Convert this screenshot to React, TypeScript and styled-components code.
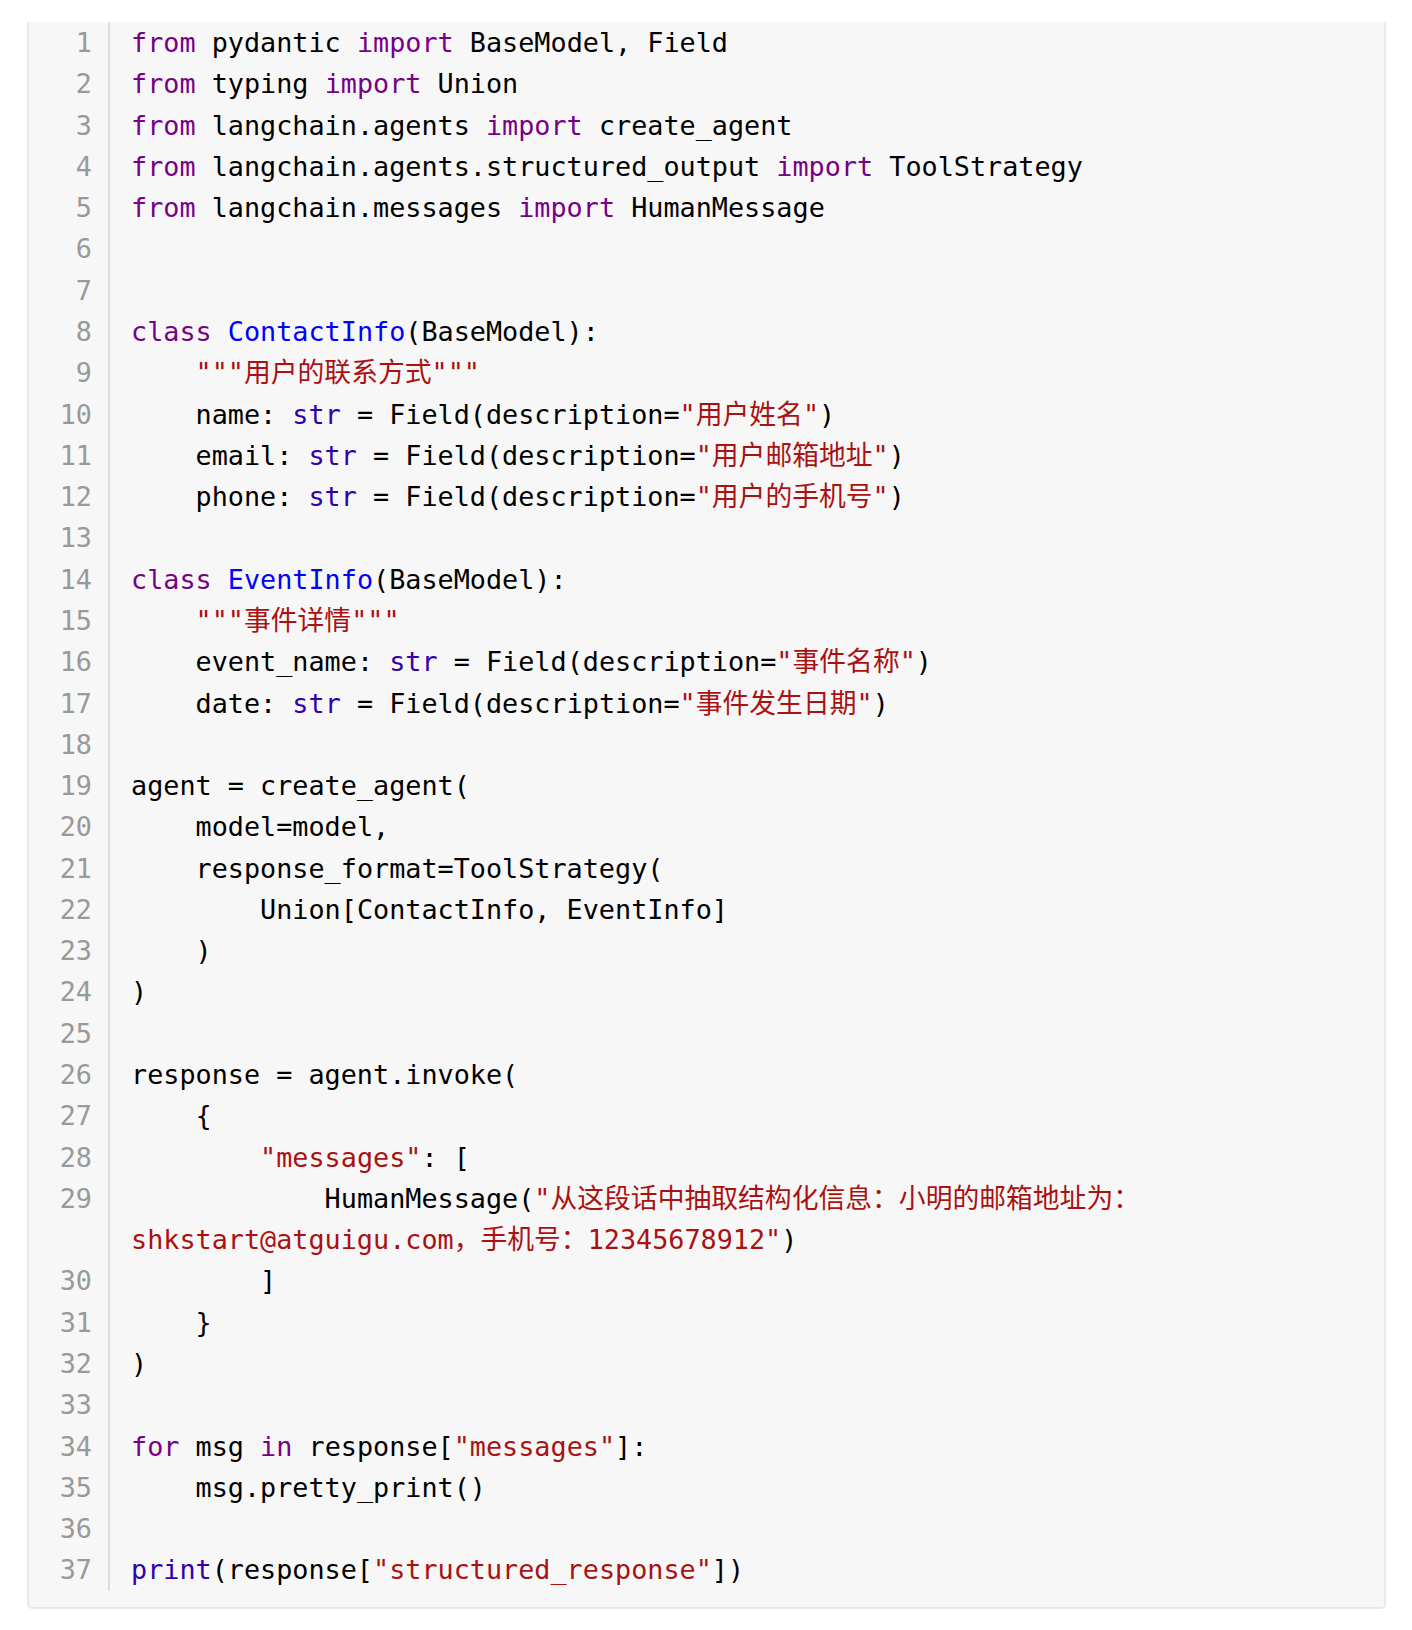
import React from "react";
import styled, { createGlobalStyle } from "styled-components";

const GlobalStyle = createGlobalStyle`
  html, body {
    margin: 0;
    padding: 0;
    background: #ffffff;
  }
`;

type Kind = "p" | "k" | "d" | "b" | "s";
type Token = [Kind, string];

const colors: Record<Kind, string> = {
  p: "#000000",
  k: "#770088",
  d: "#0000ff",
  b: "#3300aa",
  s: "#aa1111",
};

const lines: Token[][] = [
  [["k", "from"], ["p", " pydantic "], ["k", "import"], ["p", " BaseModel, Field"]],
  [["k", "from"], ["p", " typing "], ["k", "import"], ["p", " Union"]],
  [["k", "from"], ["p", " langchain.agents "], ["k", "import"], ["p", " create_agent"]],
  [["k", "from"], ["p", " langchain.agents.structured_output "], ["k", "import"], ["p", " ToolStrategy"]],
  [["k", "from"], ["p", " langchain.messages "], ["k", "import"], ["p", " HumanMessage"]],
  [],
  [],
  [["k", "class"], ["p", " "], ["d", "ContactInfo"], ["p", "(BaseModel):"]],
  [["p", "    "], ["s", '"""用户的联系方式"""']],
  [["p", "    name: "], ["b", "str"], ["p", " = Field(description="], ["s", '"用户姓名"'], ["p", ")"]],
  [["p", "    email: "], ["b", "str"], ["p", " = Field(description="], ["s", '"用户邮箱地址"'], ["p", ")"]],
  [["p", "    phone: "], ["b", "str"], ["p", " = Field(description="], ["s", '"用户的手机号"'], ["p", ")"]],
  [],
  [["k", "class"], ["p", " "], ["d", "EventInfo"], ["p", "(BaseModel):"]],
  [["p", "    "], ["s", '"""事件详情"""']],
  [["p", "    event_name: "], ["b", "str"], ["p", " = Field(description="], ["s", '"事件名称"'], ["p", ")"]],
  [["p", "    date: "], ["b", "str"], ["p", " = Field(description="], ["s", '"事件发生日期"'], ["p", ")"]],
  [],
  [["p", "agent = create_agent("]],
  [["p", "    model=model,"]],
  [["p", "    response_format=ToolStrategy("]],
  [["p", "        Union[ContactInfo, EventInfo]"]],
  [["p", "    )"]],
  [["p", ")"]],
  [],
  [["p", "response = agent.invoke("]],
  [["p", "    {"]],
  [["p", "        "], ["s", '"messages"'], ["p", ": ["]],
  [
    ["p", "            HumanMessage("],
    ["s", '"从这段话中抽取结构化信息：小明的邮箱地址为：shkstart@atguigu.com，手机号：12345678912"'],
    ["p", ")"],
  ],
  [["p", "        ]"]],
  [["p", "    }"]],
  [["p", ")"]],
  [],
  [["k", "for"], ["p", " msg "], ["k", "in"], ["p", " response["], ["s", '"messages"'], ["p", "]:"]],
  [["p", "    msg.pretty_print()"]],
  [],
  [["b", "print"], ["p", "(response["], ["s", '"structured_response"'], ["p", "])"]],
];

const Page = styled.div`
  padding: 22px 26px 0 27px;
`;

const CodeBlock = styled.div`
  width: 1359px;
  box-sizing: border-box;
  background: #f7f7f7;
  border: 2px solid #e7eaed;
  border-top: none;
  border-radius: 0 0 5px 5px;
  padding-bottom: 16px;
  font-family: "DejaVu Sans Mono", "Noto Sans CJK SC", monospace;
  font-size: 26.8px;
  line-height: 41.28px;
`;

const Row = styled.div`
  display: grid;
  grid-template-columns: 81px 1fr;
`;

const LineNo = styled.div`
  box-sizing: border-box;
  border-right: 2px solid #dddddd;
  padding-right: 16px;
  text-align: right;
  color: #999999;
`;

const Code = styled.div`
  min-height: 41.28px;
  padding-left: 21px;
  padding-right: 8px;
  white-space: pre-wrap;
  color: #000000;
`;

const Tok = styled.span<{ $kind: Kind }>`
  color: ${(p) => colors[p.$kind]};
`;

export default function App() {
  return (
    <>
      <GlobalStyle />
      <Page>
        <CodeBlock>
          {lines.map((toks, i) => (
            <Row key={i}>
              <LineNo>{i + 1}</LineNo>
              <Code>
                {toks.map(([kind, text], j) => (
                  <Tok key={j} $kind={kind}>
                    {text}
                  </Tok>
                ))}
              </Code>
            </Row>
          ))}
        </CodeBlock>
      </Page>
    </>
  );
}
